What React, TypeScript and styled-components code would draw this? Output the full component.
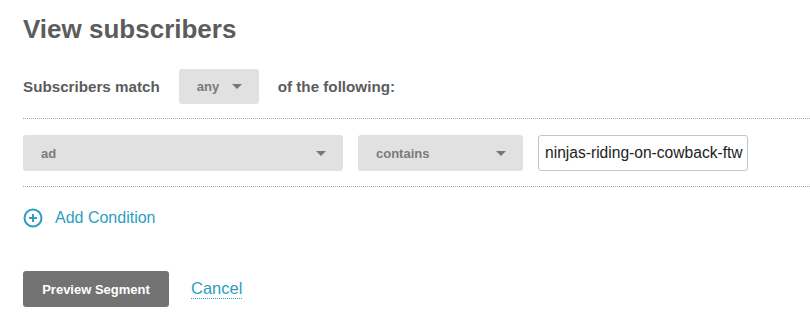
import styled, { createGlobalStyle } from "styled-components";

const GlobalStyle = createGlobalStyle`
  body {
    margin: 0;
    background: #ffffff;
    font-family: "Liberation Sans", Arial, sans-serif;
  }
`;

const Page = styled.div`
  padding-left: 23px;
  width: 787px;
`;

const Title = styled.h1`
  margin: 14px 0 0;
  font-size: 26px;
  line-height: 30px;
  font-weight: 700;
  color: #5c5c5c;
`;

const MatchRow = styled.div`
  display: flex;
  align-items: center;
  gap: 19px;
  margin-top: 25px;
  padding-bottom: 14px;
  border-bottom: 1px dotted #a8a8a8;
`;

const Label = styled.span`
  font-size: 15.2px;
  font-weight: 700;
  color: #5c5c5c;
`;

const Select = styled.div<{ $width: number }>`
  display: flex;
  align-items: center;
  justify-content: space-between;
  box-sizing: border-box;
  width: ${(p) => p.$width}px;
  height: ${(p) => (p.$width < 100 ? 35 : 36)}px;
  padding: 0 17px 0 18px;
  background: #e1e1e1;
  border-radius: 3px;
  font-size: 13px;
  font-weight: 700;
  color: #7a7a7a;
`;

const Caret = styled.span`
  width: 0;
  height: 0;
  border-left: 5px solid transparent;
  border-right: 5px solid transparent;
  border-top: 5px solid #777777;
`;

const ConditionRow = styled.div`
  display: flex;
  align-items: center;
  gap: 15px;
  padding: 16px 0 15px;
  border-bottom: 1px dotted #a8a8a8;
`;

const TextInput = styled.input`
  box-sizing: border-box;
  width: 210px;
  height: 36px;
  padding: 0 4px 0 6px;
  border: 1px solid #c4c4c4;
  border-radius: 3px;
  font-family: "Liberation Sans", Arial, sans-serif;
  font-size: 15.6px;
  color: #222222;
  outline: none;
`;

const AddLink = styled.a`
  display: flex;
  align-items: center;
  gap: 12px;
  margin-top: 21px;
  height: 20px;
  font-size: 16px;
  color: #2c9ec0;
  text-decoration: none;
  cursor: pointer;
`;

const Actions = styled.div`
  display: flex;
  align-items: center;
  gap: 22px;
  margin-top: 43px;
`;

const PreviewButton = styled.button`
  width: 146px;
  height: 36px;
  border: none;
  border-radius: 3px;
  background: #737373;
  color: #ffffff;
  font-family: "Liberation Sans", Arial, sans-serif;
  font-size: 13px;
  font-weight: 700;
  cursor: pointer;
`;

const CancelLink = styled.a`
  font-size: 16.5px;
  color: #2c9ec0;
  text-decoration: none;
  border-bottom: 1px dotted #2c9ec0;
  line-height: 19px;
  cursor: pointer;
`;

function PlusCircle() {
  return (
    <svg width="20" height="20" viewBox="0 0 20 20" fill="none">
      <circle cx="10" cy="10" r="8.5" stroke="#2c9ec0" strokeWidth="2" />
      <path d="M10 6v8M6 10h8" stroke="#2c9ec0" strokeWidth="2" />
    </svg>
  );
}

export default function App() {
  return (
    <>
      <GlobalStyle />
      <Page>
        <Title>View subscribers</Title>
        <MatchRow>
          <Label>Subscribers match</Label>
          <Select $width={80}>
            any
            <Caret />
          </Select>
          <Label>of the following:</Label>
        </MatchRow>
        <ConditionRow>
          <Select $width={320}>
            ad
            <Caret />
          </Select>
          <Select $width={165}>
            contains
            <Caret />
          </Select>
          <TextInput defaultValue="ninjas-riding-on-cowback-ftw" />
        </ConditionRow>
        <AddLink>
          <PlusCircle />
          Add Condition
        </AddLink>
        <Actions>
          <PreviewButton>Preview Segment</PreviewButton>
          <CancelLink>Cancel</CancelLink>
        </Actions>
      </Page>
    </>
  );
}
